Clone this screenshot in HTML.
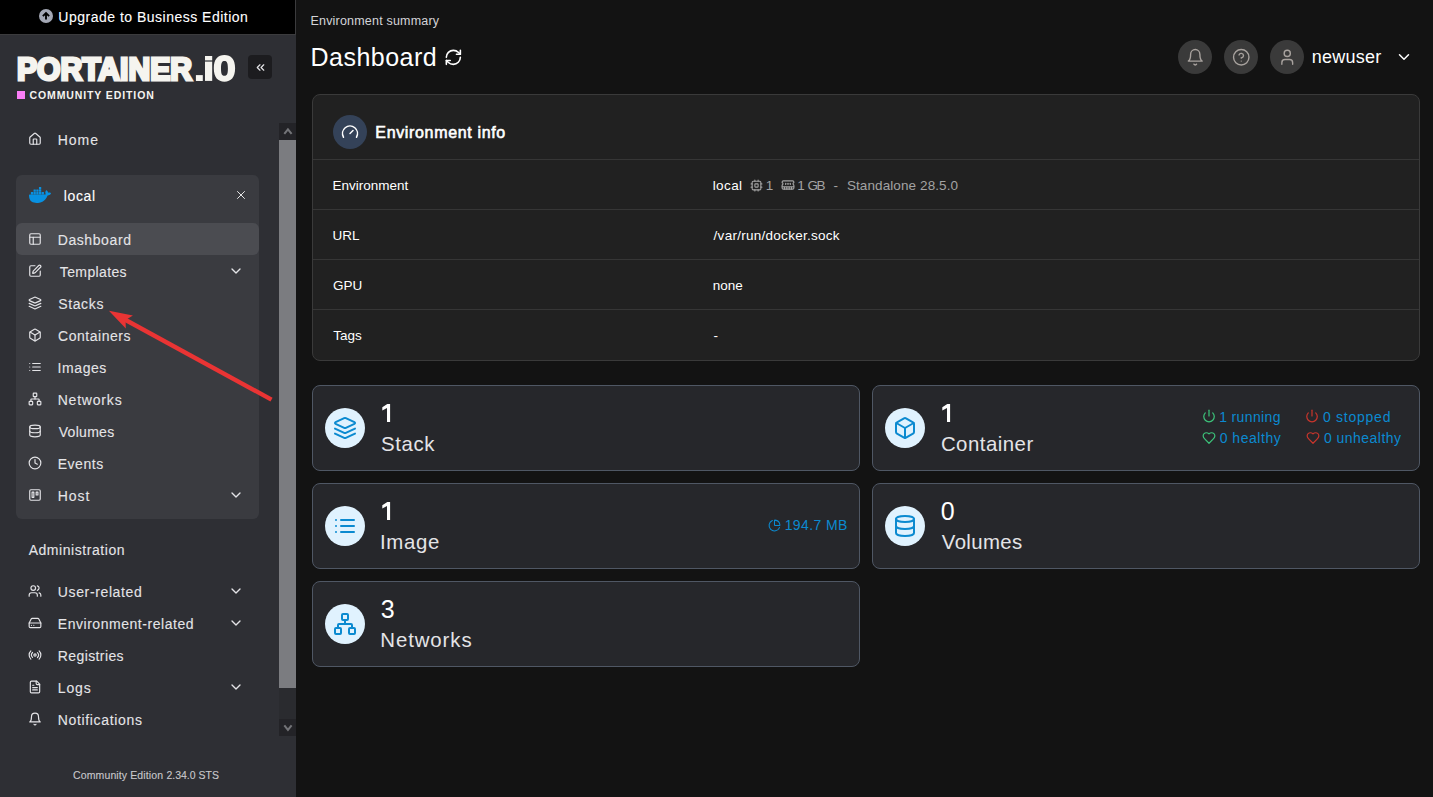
<!DOCTYPE html>
<html><head><meta charset="utf-8"><title>Portainer Dashboard</title>
<style>
html,body{margin:0;padding:0;}
body{width:1433px;height:797px;overflow:hidden;position:relative;background:#131313;font-family:"Liberation Sans",sans-serif;}
.t{position:absolute;white-space:nowrap;line-height:1;}
.sb .t{-webkit-text-stroke:0.1px currentColor;}
.r{position:absolute;}
.i{position:absolute;display:block;}
</style></head><body>
<div class="sb">
<div class="r" style="left:0px;top:0px;width:296px;height:797px;background:#2e2f34;"></div>
<div class="r" style="left:0px;top:0px;width:296px;height:35px;background:#3b3b3d;"></div>
<div class="r" style="left:0px;top:0px;width:295px;height:34px;background:#000000;"></div>
<svg class="i" style="left:39px;top:8.9px" width="14" height="14" viewBox="0 0 24 24"><circle cx="12" cy="12" r="12" fill="#a4a8b5"/><path d="M12 18.2V6.8M6.6 12.2 12 6.8l5.4 5.4" fill="none" stroke="#000" stroke-width="3.2" stroke-linecap="butt" stroke-linejoin="miter"/></svg>
<div class="t" style="left:58.35px;top:10.22px;font-size:14px;color:#ffffff;letter-spacing:0.495px;">Upgrade to Business Edition</div>
<svg class="i" style="left:0px;top:40px" width="250" height="50" viewBox="0 40 250 50"><text x="17.0" y="79.5" font-family="Liberation Sans" font-weight="700" font-size="32" fill="#f5f4ef" stroke="#f5f4ef" stroke-width="3" stroke-linejoin="miter" textLength="175.0" lengthAdjust="spacingAndGlyphs">PORTAINER</text><rect x="195.9" y="75.1" width="6.9" height="5.9" fill="#f5f4ef"/><rect x="205" y="56" width="7.2" height="4.4" fill="#f5f4ef"/><rect x="205" y="61.6" width="7.2" height="19.3" fill="#f5f4ef"/><path fill-rule="evenodd" fill="#f5f4ef" d="M224.45 55 C231 55 235.1 59 235.1 68.35 C235.1 77.7 231 81.7 224.45 81.7 C217.9 81.7 213.8 77.7 213.8 68.35 C213.8 59 217.9 55 224.45 55 Z M224.45 61 C222.2 61 221 62.5 221 68.4 C221 74.3 222.2 75.8 224.45 75.8 C226.7 75.8 227.9 74.3 227.9 68.4 C227.9 62.5 226.7 61 224.45 61 Z"/></svg>
<div class="r" style="left:17px;top:91px;width:8px;height:8px;background:#f97ef6;"></div>
<div class="t" style="left:29.48px;top:89.71px;font-size:10.5px;color:#f5f4ef;font-weight:700;-webkit-text-stroke:0;letter-spacing:0.891px;">COMMUNITY EDITION</div>
<div class="r" style="left:248px;top:55px;width:24px;height:24px;background:#1c1c1f;border-radius:4px;"></div>
<svg class="i" style="left:253.50px;top:60.50px;" width="13" height="13" viewBox="0 0 24 24" fill="none" stroke="#e4e4e7" stroke-width="2.2" stroke-linecap="round" stroke-linejoin="round"><path d="m11 17-5-5 5-5"/><path d="m18 17-5-5 5-5"/></svg>
<svg class="i" style="left:28.00px;top:131.60px;" width="14" height="14" viewBox="0 0 24 24" fill="none" stroke="#e4e4e7" stroke-width="2" stroke-linecap="round" stroke-linejoin="round"><path d="M15 21v-8a1 1 0 0 0-1-1h-4a1 1 0 0 0-1 1v8"/><path d="M3 10a2 2 0 0 1 .709-1.528l7-5.999a2 2 0 0 1 2.582 0l7 5.999A2 2 0 0 1 21 10v9a2 2 0 0 1-2 2H5a2 2 0 0 1-2-2z"/></svg>
<div class="t" style="left:57.78px;top:133.25px;font-size:14px;color:#e4e4e7;letter-spacing:0.947px;">Home</div>
<div class="r" style="left:16px;top:175px;width:243px;height:344px;background:#3a3b40;border-radius:6px;"></div>
<svg class="i" style="left:29.2px;top:183.7px" width="22" height="22" viewBox="0 0 24 24"><path fill="#0891e2" d="M13.983 11.078h2.119a.186.186 0 00.186-.185V9.006a.186.186 0 00-.186-.186h-2.119a.185.185 0 00-.185.185v1.888c0 .102.083.185.185.185m-2.954-5.43h2.118a.186.186 0 00.186-.186V3.574a.186.186 0 00-.186-.185h-2.118a.185.185 0 00-.185.185v1.888c0 .102.082.185.185.185m0 2.716h2.118a.187.187 0 00.186-.186V6.29a.186.186 0 00-.186-.185h-2.118a.185.185 0 00-.185.185v1.887c0 .102.082.185.185.186m-2.93 0h2.12a.186.186 0 00.184-.186V6.29a.185.185 0 00-.185-.185H8.1a.185.185 0 00-.185.185v1.887c0 .102.083.185.185.186m-2.964 0h2.119a.186.186 0 00.185-.186V6.29a.185.185 0 00-.185-.185H5.136a.186.186 0 00-.186.185v1.887c0 .102.084.185.186.186m5.893 2.715h2.118a.186.186 0 00.186-.185V9.006a.186.186 0 00-.186-.186h-2.118a.185.185 0 00-.185.185v1.888c0 .102.082.185.185.185m-2.93 0h2.12a.185.185 0 00.184-.185V9.006a.185.185 0 00-.184-.186h-2.12a.185.185 0 00-.184.185v1.888c0 .102.083.185.185.185m-2.964 0h2.119a.185.185 0 00.185-.185V9.006a.185.185 0 00-.184-.186h-2.12a.186.186 0 00-.186.186v1.887c0 .102.084.185.186.185m-2.92 0h2.12a.185.185 0 00.184-.185V9.006a.185.185 0 00-.184-.186h-2.12a.185.185 0 00-.184.185v1.888c0 .102.082.185.185.185M23.763 9.89c-.065-.051-.672-.51-1.954-.51-.338.001-.676.03-1.01.087-.248-1.7-1.653-2.53-1.716-2.566l-.344-.199-.226.327c-.284.438-.49.922-.612 1.43-.23.97-.09 1.882.403 2.661-.595.332-1.55.413-1.744.42H.751a.751.751 0 00-.75.748 11.376 11.376 0 00.692 4.062c.545 1.428 1.355 2.48 2.41 3.124 1.18.723 3.1 1.137 5.275 1.137.983.003 1.963-.086 2.93-.266a12.248 12.248 0 003.823-1.389c.98-.567 1.86-1.288 2.61-2.136 1.252-1.418 1.998-2.997 2.553-4.4h.221c1.372 0 2.215-.549 2.68-1.009.309-.293.55-.65.707-1.046l.098-.288Z"/></svg>
<div class="t" style="left:63.69px;top:189.15px;font-size:14px;color:#ffffff;letter-spacing:0.663px;">local</div>
<svg class="i" style="left:234.00px;top:188.00px;" width="14" height="14" viewBox="0 0 24 24" fill="none" stroke="#ffffff" stroke-width="1.5" stroke-linecap="round" stroke-linejoin="round"><path d="M18 6 6 18"/><path d="m6 6 12 12"/></svg>
<div class="r" style="left:16px;top:223px;width:243px;height:32px;background:#4b4c51;border-radius:6px;"></div>
<svg class="i" style="left:28.00px;top:232.00px;" width="14" height="14" viewBox="0 0 24 24" fill="none" stroke="#e4e4e7" stroke-width="2" stroke-linecap="round" stroke-linejoin="round"><rect width="18" height="18" x="3" y="3" rx="2"/><path d="M3 9h18"/><path d="M9 21V9"/></svg>
<div class="t" style="left:57.68px;top:233.05px;font-size:14px;color:#e4e4e7;letter-spacing:0.596px;">Dashboard</div>
<svg class="i" style="left:28.00px;top:264.00px;" width="14" height="14" viewBox="0 0 24 24" fill="none" stroke="#e4e4e7" stroke-width="2" stroke-linecap="round" stroke-linejoin="round"><path d="M12 3H5a2 2 0 0 0-2 2v14a2 2 0 0 0 2 2h14a2 2 0 0 0 2-2v-7"/><path d="M18.375 2.625a1 1 0 0 1 3 3l-9.013 9.014a2 2 0 0 1-.853.505l-2.873.84a.5.5 0 0 1-.62-.62l.84-2.873a2 2 0 0 1 .506-.852z"/></svg>
<div class="t" style="left:59.85px;top:265.05px;font-size:14px;color:#e4e4e7;letter-spacing:0.362px;">Templates</div>
<svg class="i" style="left:228.00px;top:263.00px;" width="16" height="16" viewBox="0 0 24 24" fill="none" stroke="#e4e4e7" stroke-width="2" stroke-linecap="round" stroke-linejoin="round"><path d="m6 9 6 6 6-6"/></svg>
<svg class="i" style="left:28.00px;top:296.00px;" width="14" height="14" viewBox="0 0 24 24" fill="none" stroke="#e4e4e7" stroke-width="2" stroke-linecap="round" stroke-linejoin="round"><path d="m12.83 2.18a2 2 0 0 0-1.66 0L2.6 6.08a1 1 0 0 0 0 1.83l8.58 3.91a2 2 0 0 0 1.66 0l8.58-3.9a1 1 0 0 0 0-1.83Z"/><path d="m22 17.65-9.17 4.16a2 2 0 0 1-1.66 0L2 17.65"/><path d="m22 12.65-9.17 4.16a2 2 0 0 1-1.66 0L2 12.65"/></svg>
<div class="t" style="left:58.17px;top:297.05px;font-size:14px;color:#e4e4e7;letter-spacing:0.644px;">Stacks</div>
<svg class="i" style="left:28.00px;top:328.00px;" width="14" height="14" viewBox="0 0 24 24" fill="none" stroke="#e4e4e7" stroke-width="2" stroke-linecap="round" stroke-linejoin="round"><path d="M21 8a2 2 0 0 0-1-1.73l-7-4a2 2 0 0 0-2 0l-7 4A2 2 0 0 0 3 8v8a2 2 0 0 0 1 1.73l7 4a2 2 0 0 0 2 0l7-4A2 2 0 0 0 21 16Z"/><path d="m3.3 7 8.7 5 8.7-5"/><path d="M12 22V12"/></svg>
<div class="t" style="left:58.10px;top:329.05px;font-size:14px;color:#e4e4e7;letter-spacing:0.522px;">Containers</div>
<svg class="i" style="left:28.00px;top:360.00px;" width="14" height="14" viewBox="0 0 24 24" fill="none" stroke="#e4e4e7" stroke-width="2" stroke-linecap="round" stroke-linejoin="round"><line x1="8" x2="21" y1="6" y2="6"/><line x1="8" x2="21" y1="12" y2="12"/><line x1="8" x2="21" y1="18" y2="18"/><line x1="3" x2="3.01" y1="6" y2="6"/><line x1="3" x2="3.01" y1="12" y2="12"/><line x1="3" x2="3.01" y1="18" y2="18"/></svg>
<div class="t" style="left:57.54px;top:361.05px;font-size:14px;color:#e4e4e7;letter-spacing:0.586px;">Images</div>
<svg class="i" style="left:28.00px;top:392.00px;" width="14" height="14" viewBox="0 0 24 24" fill="none" stroke="#e4e4e7" stroke-width="2" stroke-linecap="round" stroke-linejoin="round"><rect x="16" y="16" width="6" height="6" rx="1"/><rect x="2" y="16" width="6" height="6" rx="1"/><rect x="9" y="2" width="6" height="6" rx="1"/><path d="M5 16v-3a1 1 0 0 1 1-1h12a1 1 0 0 1 1 1v3"/><path d="M12 12V8"/></svg>
<div class="t" style="left:57.68px;top:393.05px;font-size:14px;color:#e4e4e7;letter-spacing:0.804px;">Networks</div>
<svg class="i" style="left:28.00px;top:424.00px;" width="14" height="14" viewBox="0 0 24 24" fill="none" stroke="#e4e4e7" stroke-width="2" stroke-linecap="round" stroke-linejoin="round"><ellipse cx="12" cy="5" rx="9" ry="3"/><path d="M3 5V19A9 3 0 0 0 21 19V5"/><path d="M3 12A9 3 0 0 0 21 12"/></svg>
<div class="t" style="left:58.73px;top:425.05px;font-size:14px;color:#e4e4e7;letter-spacing:0.295px;">Volumes</div>
<svg class="i" style="left:28.00px;top:456.00px;" width="14" height="14" viewBox="0 0 24 24" fill="none" stroke="#e4e4e7" stroke-width="2" stroke-linecap="round" stroke-linejoin="round"><circle cx="12" cy="12" r="10"/><polyline points="12 6 12 12 16 14"/></svg>
<div class="t" style="left:57.68px;top:457.05px;font-size:14px;color:#e4e4e7;letter-spacing:0.548px;">Events</div>
<svg class="i" style="left:28.00px;top:488.00px;" width="14" height="14" viewBox="0 0 24 24" fill="none" stroke="#e4e4e7" stroke-width="2" stroke-linecap="round" stroke-linejoin="round"><rect width="18" height="18" x="3" y="3" rx="2" ry="2"/><rect width="3" height="9" x="7" y="7"/><rect width="3" height="5" x="14" y="7"/></svg>
<div class="t" style="left:57.68px;top:489.05px;font-size:14px;color:#e4e4e7;letter-spacing:0.973px;">Host</div>
<svg class="i" style="left:228.00px;top:487.00px;" width="16" height="16" viewBox="0 0 24 24" fill="none" stroke="#e4e4e7" stroke-width="2" stroke-linecap="round" stroke-linejoin="round"><path d="m6 9 6 6 6-6"/></svg>
<div class="t" style="left:28.63px;top:542.85px;font-size:14px;color:#e4e4e7;letter-spacing:0.561px;">Administration</div>
<svg class="i" style="left:28.00px;top:583.90px;" width="14" height="14" viewBox="0 0 24 24" fill="none" stroke="#e4e4e7" stroke-width="2" stroke-linecap="round" stroke-linejoin="round"><path d="M16 21v-2a4 4 0 0 0-4-4H6a4 4 0 0 0-4 4v2"/><circle cx="9" cy="7" r="4"/><path d="M22 21v-2a4 4 0 0 0-3-3.87"/><path d="M16 3.13a4 4 0 0 1 0 7.75"/></svg>
<div class="t" style="left:57.85px;top:584.95px;font-size:14px;color:#e4e4e7;letter-spacing:0.624px;">User-related</div>
<svg class="i" style="left:228.00px;top:582.90px;" width="16" height="16" viewBox="0 0 24 24" fill="none" stroke="#e4e4e7" stroke-width="2" stroke-linecap="round" stroke-linejoin="round"><path d="m6 9 6 6 6-6"/></svg>
<svg class="i" style="left:28.00px;top:615.90px;" width="14" height="14" viewBox="0 0 24 24" fill="none" stroke="#e4e4e7" stroke-width="2" stroke-linecap="round" stroke-linejoin="round"><line x1="22" x2="2" y1="12" y2="12"/><path d="M5.45 5.11 2 12v6a2 2 0 0 0 2 2h16a2 2 0 0 0 2-2v-6l-3.45-6.89A2 2 0 0 0 16.76 4H7.24a2 2 0 0 0-1.79 1.11z"/><line x1="6" x2="6.01" y1="16" y2="16"/><line x1="10" x2="10.01" y1="16" y2="16"/></svg>
<div class="t" style="left:57.78px;top:616.95px;font-size:14px;color:#e4e4e7;letter-spacing:0.537px;">Environment-related</div>
<svg class="i" style="left:228.00px;top:614.90px;" width="16" height="16" viewBox="0 0 24 24" fill="none" stroke="#e4e4e7" stroke-width="2" stroke-linecap="round" stroke-linejoin="round"><path d="m6 9 6 6 6-6"/></svg>
<svg class="i" style="left:28.00px;top:647.90px;" width="14" height="14" viewBox="0 0 24 24" fill="none" stroke="#e4e4e7" stroke-width="2" stroke-linecap="round" stroke-linejoin="round"><path d="M4.9 19.1C1 15.2 1 8.8 4.9 4.9"/><path d="M7.8 16.2c-2.3-2.3-2.3-6.1 0-8.5"/><circle cx="12" cy="12" r="2"/><path d="M16.2 7.8c2.3 2.3 2.3 6.1 0 8.5"/><path d="M19.1 4.9C23 8.8 23 15.1 19.1 19"/></svg>
<div class="t" style="left:57.78px;top:648.95px;font-size:14px;color:#e4e4e7;letter-spacing:0.398px;">Registries</div>
<svg class="i" style="left:28.00px;top:679.90px;" width="14" height="14" viewBox="0 0 24 24" fill="none" stroke="#e4e4e7" stroke-width="2" stroke-linecap="round" stroke-linejoin="round"><path d="M15 2H6a2 2 0 0 0-2 2v16a2 2 0 0 0 2 2h12a2 2 0 0 0 2-2V7Z"/><path d="M14 2v4a2 2 0 0 0 2 2h4"/><path d="M10 9H8"/><path d="M16 13H8"/><path d="M16 17H8"/></svg>
<div class="t" style="left:57.78px;top:680.95px;font-size:14px;color:#e4e4e7;letter-spacing:0.843px;">Logs</div>
<svg class="i" style="left:228.00px;top:678.90px;" width="16" height="16" viewBox="0 0 24 24" fill="none" stroke="#e4e4e7" stroke-width="2" stroke-linecap="round" stroke-linejoin="round"><path d="m6 9 6 6 6-6"/></svg>
<svg class="i" style="left:28.00px;top:711.90px;" width="14" height="14" viewBox="0 0 24 24" fill="none" stroke="#e4e4e7" stroke-width="2" stroke-linecap="round" stroke-linejoin="round"><path d="M6 8a6 6 0 0 1 12 0c0 7 3 9 3 9H3s3-2 3-9"/><path d="M10.3 21a1.94 1.94 0 0 0 3.4 0"/></svg>
<div class="t" style="left:57.78px;top:712.95px;font-size:14px;color:#e4e4e7;letter-spacing:0.657px;">Notifications</div>
<div class="t" style="left:73.07px;top:770.11px;font-size:10.5px;color:#c9c9cc;letter-spacing:0.113px;">Community Edition</div>
<div class="t" style="left:166.47px;top:770.11px;font-size:10.5px;color:#c9c9cc;letter-spacing:-0.011px;">2.34.0 STS</div>
<div class="r" style="left:279px;top:123px;width:17px;height:613px;background:#2a2b2f;"></div>
<div class="r" style="left:279px;top:123px;width:17px;height:17px;background:#232327;"></div>
<div class="r" style="left:279px;top:719px;width:17px;height:17px;background:#232327;"></div>
<div class="r" style="left:279px;top:140px;width:17px;height:548px;background:#7b7c80;"></div>
<svg class="i" style="left:282.5px;top:126.5px" width="10" height="10" viewBox="0 0 10 10"><path d="M1.3 6.9 4.95 2.3 8.6 6.9" fill="none" stroke="#737478" stroke-width="2"/></svg>
<svg class="i" style="left:282.5px;top:723px" width="10" height="10" viewBox="0 0 10 10"><path d="M1.3 2.3 4.95 6.9 8.6 2.3" fill="none" stroke="#737478" stroke-width="2"/></svg>
</div>
<svg class="i" style="left:0;top:0" width="300" height="420" viewBox="0 0 300 420"><line x1="123.82" y1="318.95" x2="271.50" y2="399.60" stroke="#e93434" stroke-width="4.4" stroke-linecap="butt"/><polygon points="108.90,310.80 132.90,315.47 125.58,319.91 125.80,328.46" fill="#e93434"/></svg>
<div class="t" style="left:310.50px;top:14.52px;font-size:12.5px;color:#d4d4d8;letter-spacing:0.194px;">Environment summary</div>
<div class="t" style="left:310.60px;top:45.04px;font-size:25px;color:#ffffff;letter-spacing:0.472px;">Dashboard</div>
<svg class="i" style="left:443.75px;top:47.65px;" width="18.7" height="18.7" viewBox="0 0 24 24" fill="none" stroke="#ffffff" stroke-width="2.05" stroke-linecap="round" stroke-linejoin="round"><path d="M3 12a9 9 0 0 1 9-9 9.75 9.75 0 0 1 6.74 2.74L21 8"/><path d="M21 3v5h-5"/><path d="M21 12a9 9 0 0 1-9 9 9.75 9.75 0 0 1-6.74-2.74L3 16"/><path d="M8 16H3v5"/></svg>
<div class="r" style="left:1178px;top:40px;width:34px;height:34px;border-radius:50%;background:#3a3a3a"></div>
<svg class="i" style="left:1185.75px;top:47.75px;" width="18.5" height="18.5" viewBox="0 0 24 24" fill="none" stroke="#a8a29e" stroke-width="1.8" stroke-linecap="round" stroke-linejoin="round"><path d="M6 8a6 6 0 0 1 12 0c0 7 3 9 3 9H3s3-2 3-9"/><path d="M10.3 21a1.94 1.94 0 0 0 3.4 0"/></svg>
<div class="r" style="left:1224px;top:40px;width:34px;height:34px;border-radius:50%;background:#3a3a3a"></div>
<svg class="i" style="left:1231.75px;top:47.75px;" width="18.5" height="18.5" viewBox="0 0 24 24" fill="none" stroke="#a8a29e" stroke-width="1.8" stroke-linecap="round" stroke-linejoin="round"><circle cx="12" cy="12" r="10"/><path d="M9.09 9a3 3 0 0 1 5.83 1c0 2-3 3-3 3"/><path d="M12 17h.01"/></svg>
<div class="r" style="left:1270px;top:40px;width:34px;height:34px;border-radius:50%;background:#3a3a3a"></div>
<svg class="i" style="left:1277.75px;top:47.75px;" width="18.5" height="18.5" viewBox="0 0 24 24" fill="none" stroke="#a8a29e" stroke-width="1.8" stroke-linecap="round" stroke-linejoin="round"><path d="M19 21v-2a4 4 0 0 0-4-4H9a4 4 0 0 0-4 4v2"/><circle cx="12" cy="7" r="4"/></svg>
<div class="t" style="left:1311.83px;top:47.56px;font-size:18px;color:#ffffff;letter-spacing:0.215px;">newuser</div>
<svg class="i" style="left:1395.00px;top:48.00px;" width="18" height="18" viewBox="0 0 24 24" fill="none" stroke="#ffffff" stroke-width="2" stroke-linecap="round" stroke-linejoin="round"><path d="m6 9 6 6 6-6"/></svg>
<div class="r" style="left:312px;top:94px;width:1108px;height:267px;box-sizing:border-box;border:1px solid #3a3a3a;border-radius:8px;background:#212121"></div>
<div class="r" style="left:333px;top:115px;width:34px;height:34px;border-radius:50%;background:#344258"></div>
<svg class="i" style="left:341.00px;top:123.00px;" width="18" height="18" viewBox="0 0 24 24" fill="none" stroke="#ffffff" stroke-width="2" stroke-linecap="round" stroke-linejoin="round"><path d="m12 14 4-4"/><path d="M3.34 19a10 10 0 1 1 17.32 0"/></svg>
<div class="t" style="left:375.32px;top:124.66px;font-size:16px;color:#ffffff;letter-spacing:0.656px;-webkit-text-stroke:0.6px #fff;">Environment info</div>
<div class="r" style="left:313px;top:159px;width:1106px;height:1px;background:#363636;"></div>
<div class="r" style="left:313px;top:209px;width:1106px;height:1px;background:#363636;"></div>
<div class="r" style="left:313px;top:259px;width:1106px;height:1px;background:#363636;"></div>
<div class="r" style="left:313px;top:309px;width:1106px;height:1px;background:#363636;"></div>
<div class="t" style="left:332.52px;top:178.77px;font-size:13.5px;color:#ffffff;">Environment</div>
<div class="t" style="left:332.59px;top:228.57px;font-size:13.5px;color:#ffffff;">URL</div>
<div class="t" style="left:332.93px;top:278.57px;font-size:13.5px;color:#ffffff;">GPU</div>
<div class="t" style="left:333.26px;top:328.57px;font-size:13.5px;color:#ffffff;">Tags</div>
<div class="t" style="left:712.72px;top:178.77px;font-size:13.5px;color:#ffffff;letter-spacing:0.403px;">local</div>
<svg class="i" style="left:750.00px;top:178.50px;" width="13" height="13" viewBox="0 0 24 24" fill="none" stroke="#a3a3a3" stroke-width="2" stroke-linecap="round" stroke-linejoin="round"><rect width="16" height="16" x="4" y="4" rx="2"/><rect width="6" height="6" x="9" y="9" rx="1"/><path d="M15 2v2"/><path d="M15 20v2"/><path d="M2 15h2"/><path d="M2 9h2"/><path d="M20 15h2"/><path d="M20 9h2"/><path d="M9 2v2"/><path d="M9 20v2"/></svg>
<div class="t" style="left:765.69px;top:178.77px;font-size:13.5px;color:#a3a3a3;">1</div>
<svg class="i" style="left:780.60px;top:178.00px;" width="14" height="14" viewBox="0 0 24 24" fill="none" stroke="#a3a3a3" stroke-width="2" stroke-linecap="round" stroke-linejoin="round"><path d="M6 19v-3"/><path d="M10 19v-3"/><path d="M14 19v-3"/><path d="M18 19v-3"/><path d="M8 11V9"/><path d="M16 11V9"/><path d="M12 11V9"/><path d="M2 15h20"/><path d="M2 7a2 2 0 0 1 2-2h16a2 2 0 0 1 2 2v1.1a2 2 0 0 0 0 3.837V17a2 2 0 0 1-2 2H4a2 2 0 0 1-2-2v-5.1a2 2 0 0 0 0-3.837Z"/></svg>
<div class="t" style="left:797.29px;top:178.77px;font-size:13.5px;color:#a3a3a3;">1</div>
<div class="t" style="left:807.43px;top:178.77px;font-size:13.5px;color:#a3a3a3;letter-spacing:-1.457px;">GB</div>
<div class="t" style="left:833.59px;top:178.77px;font-size:13.5px;color:#a3a3a3;">-</div>
<div class="t" style="left:846.89px;top:178.77px;font-size:13.5px;color:#a3a3a3;letter-spacing:0.100px;">Standalone 28.5.0</div>
<div class="t" style="left:713.60px;top:228.57px;font-size:13.5px;color:#ffffff;letter-spacing:0.272px;">/var/run/docker.sock</div>
<div class="t" style="left:712.72px;top:278.57px;font-size:13.5px;color:#ffffff;">none</div>
<div class="t" style="left:713.59px;top:328.57px;font-size:13.5px;color:#ffffff;">-</div>
<div class="r" style="left:312px;top:385px;width:548px;height:86px;box-sizing:border-box;border:1px solid #4f5764;border-radius:8px;background:#26272b"></div>
<div class="r" style="left:325px;top:408px;width:40px;height:40px;border-radius:50%;background:#e0f2fe"></div>
<svg class="i" style="left:333.00px;top:416.00px;" width="24" height="24" viewBox="0 0 24 24" fill="none" stroke="#0b8ad0" stroke-width="2" stroke-linecap="round" stroke-linejoin="round"><path d="m12.83 2.18a2 2 0 0 0-1.66 0L2.6 6.08a1 1 0 0 0 0 1.83l8.58 3.91a2 2 0 0 0 1.66 0l8.58-3.9a1 1 0 0 0 0-1.83Z"/><path d="m22 17.65-9.17 4.16a2 2 0 0 1-1.66 0L2 17.65"/><path d="m22 12.65-9.17 4.16a2 2 0 0 1-1.66 0L2 12.65"/></svg>
<svg class="i" style="left:382.4px;top:403.9px" width="12" height="20" viewBox="0 0 12 20"><path fill="#ffffff" d="M8.1 0.1 L8.1 18.1 L5.0 18.1 L5.0 3.9 L0.3 6.4 L0.3 3.2 L5.3 0.1 Z"/></svg>
<div class="t" style="left:380.98px;top:433.83px;font-size:20.4px;color:#e4e4e7;letter-spacing:0.604px;-webkit-text-stroke:0;">Stack</div>
<div class="r" style="left:872px;top:385px;width:548px;height:86px;box-sizing:border-box;border:1px solid #4f5764;border-radius:8px;background:#26272b"></div>
<div class="r" style="left:885px;top:408px;width:40px;height:40px;border-radius:50%;background:#e0f2fe"></div>
<svg class="i" style="left:893.00px;top:416.00px;" width="24" height="24" viewBox="0 0 24 24" fill="none" stroke="#0b8ad0" stroke-width="2" stroke-linecap="round" stroke-linejoin="round"><path d="M21 8a2 2 0 0 0-1-1.73l-7-4a2 2 0 0 0-2 0l-7 4A2 2 0 0 0 3 8v8a2 2 0 0 0 1 1.73l7 4a2 2 0 0 0 2 0l7-4A2 2 0 0 0 21 16Z"/><path d="m3.3 7 8.7 5 8.7-5"/><path d="M12 22V12"/></svg>
<svg class="i" style="left:942.4px;top:403.9px" width="12" height="20" viewBox="0 0 12 20"><path fill="#ffffff" d="M8.1 0.1 L8.1 18.1 L5.0 18.1 L5.0 3.9 L0.3 6.4 L0.3 3.2 L5.3 0.1 Z"/></svg>
<div class="t" style="left:940.88px;top:433.83px;font-size:20.4px;color:#e4e4e7;letter-spacing:0.486px;-webkit-text-stroke:0;">Container</div>
<div class="r" style="left:312px;top:483px;width:548px;height:86px;box-sizing:border-box;border:1px solid #4f5764;border-radius:8px;background:#26272b"></div>
<div class="r" style="left:325px;top:506px;width:40px;height:40px;border-radius:50%;background:#e0f2fe"></div>
<svg class="i" style="left:333.00px;top:514.00px;" width="24" height="24" viewBox="0 0 24 24" fill="none" stroke="#0b8ad0" stroke-width="2" stroke-linecap="round" stroke-linejoin="round"><line x1="8" x2="21" y1="6" y2="6"/><line x1="8" x2="21" y1="12" y2="12"/><line x1="8" x2="21" y1="18" y2="18"/><line x1="3" x2="3.01" y1="6" y2="6"/><line x1="3" x2="3.01" y1="12" y2="12"/><line x1="3" x2="3.01" y1="18" y2="18"/></svg>
<svg class="i" style="left:382.4px;top:501.9px" width="12" height="20" viewBox="0 0 12 20"><path fill="#ffffff" d="M8.1 0.1 L8.1 18.1 L5.0 18.1 L5.0 3.9 L0.3 6.4 L0.3 3.2 L5.3 0.1 Z"/></svg>
<div class="t" style="left:380.06px;top:531.83px;font-size:20.4px;color:#e4e4e7;letter-spacing:0.661px;-webkit-text-stroke:0;">Image</div>
<div class="r" style="left:872px;top:483px;width:548px;height:86px;box-sizing:border-box;border:1px solid #4f5764;border-radius:8px;background:#26272b"></div>
<div class="r" style="left:885px;top:506px;width:40px;height:40px;border-radius:50%;background:#e0f2fe"></div>
<svg class="i" style="left:893.00px;top:514.00px;" width="24" height="24" viewBox="0 0 24 24" fill="none" stroke="#0b8ad0" stroke-width="2" stroke-linecap="round" stroke-linejoin="round"><ellipse cx="12" cy="5" rx="9" ry="3"/><path d="M3 5V19A9 3 0 0 0 21 19V5"/><path d="M3 12A9 3 0 0 0 21 12"/></svg>
<div class="t" style="left:940.70px;top:498.84px;font-size:25px;color:#ffffff;">0</div>
<div class="t" style="left:941.80px;top:531.83px;font-size:20.4px;color:#e4e4e7;letter-spacing:0.364px;-webkit-text-stroke:0;">Volumes</div>
<div class="r" style="left:312px;top:581px;width:548px;height:86px;box-sizing:border-box;border:1px solid #4f5764;border-radius:8px;background:#26272b"></div>
<div class="r" style="left:325px;top:604px;width:40px;height:40px;border-radius:50%;background:#e0f2fe"></div>
<svg class="i" style="left:333.00px;top:612.00px;" width="24" height="24" viewBox="0 0 24 24" fill="none" stroke="#0b8ad0" stroke-width="2" stroke-linecap="round" stroke-linejoin="round"><rect x="16" y="16" width="6" height="6" rx="1"/><rect x="2" y="16" width="6" height="6" rx="1"/><rect x="9" y="2" width="6" height="6" rx="1"/><path d="M5 16v-3a1 1 0 0 1 1-1h12a1 1 0 0 1 1 1v3"/><path d="M12 12V8"/></svg>
<div class="t" style="left:380.70px;top:596.84px;font-size:25px;color:#ffffff;">3</div>
<div class="t" style="left:380.27px;top:629.83px;font-size:20.4px;color:#e4e4e7;letter-spacing:0.911px;-webkit-text-stroke:0;">Networks</div>
<svg class="i" style="left:1202.00px;top:409.30px;" width="14" height="14" viewBox="0 0 24 24" fill="none" stroke="#3cc27a" stroke-width="2.1" stroke-linecap="round" stroke-linejoin="round"><path d="M12 2v10"/><path d="M18.4 6.6a9 9 0 1 1-12.77.04"/></svg>
<div class="t" style="left:1219.15px;top:409.85px;font-size:14px;color:#0b8ad0;letter-spacing:0.372px;">1 running</div>
<svg class="i" style="left:1305.00px;top:409.30px;" width="14" height="14" viewBox="0 0 24 24" fill="none" stroke="#c8352c" stroke-width="2.1" stroke-linecap="round" stroke-linejoin="round"><path d="M12 2v10"/><path d="M18.4 6.6a9 9 0 1 1-12.77.04"/></svg>
<div class="t" style="left:1322.94px;top:409.85px;font-size:14px;color:#0b8ad0;letter-spacing:0.751px;">0 stopped</div>
<svg class="i" style="left:1202.00px;top:430.80px;" width="14" height="14" viewBox="0 0 24 24" fill="none" stroke="#3cc27a" stroke-width="2.1" stroke-linecap="round" stroke-linejoin="round"><path d="M19 14c1.49-1.46 3-3.21 3-5.5A5.5 5.5 0 0 0 16.5 3c-1.76 0-3 .5-4.5 2-1.5-1.5-2.74-2-4.5-2A5.5 5.5 0 0 0 2 8.5c0 2.3 1.5 4.05 3 5.5l7 7Z"/></svg>
<div class="t" style="left:1219.64px;top:430.65px;font-size:14px;color:#0b8ad0;letter-spacing:0.536px;">0 healthy</div>
<svg class="i" style="left:1305.80px;top:430.80px;" width="14" height="14" viewBox="0 0 24 24" fill="none" stroke="#c8352c" stroke-width="2.1" stroke-linecap="round" stroke-linejoin="round"><path d="M19 14c1.49-1.46 3-3.21 3-5.5A5.5 5.5 0 0 0 16.5 3c-1.76 0-3 .5-4.5 2-1.5-1.5-2.74-2-4.5-2A5.5 5.5 0 0 0 2 8.5c0 2.3 1.5 4.05 3 5.5l7 7Z"/></svg>
<div class="t" style="left:1323.94px;top:430.65px;font-size:14px;color:#0b8ad0;letter-spacing:0.475px;">0 unhealthy</div>
<svg class="i" style="left:767.90px;top:518.50px;" width="13" height="13" viewBox="0 0 24 24" fill="none" stroke="#0b8ad0" stroke-width="2" stroke-linecap="round" stroke-linejoin="round"><path d="M21 12c.552 0 1.005-.449.95-.998a10 10 0 0 0-8.953-8.951c-.55-.055-.998.398-.998.95v8a1 1 0 0 0 1 1z"/><path d="M21.21 15.89A10 10 0 1 1 8 2.83"/></svg>
<div class="t" style="left:784.65px;top:518.35px;font-size:14px;color:#0b8ad0;letter-spacing:0.404px;">194.7 MB</div>
</body></html>
